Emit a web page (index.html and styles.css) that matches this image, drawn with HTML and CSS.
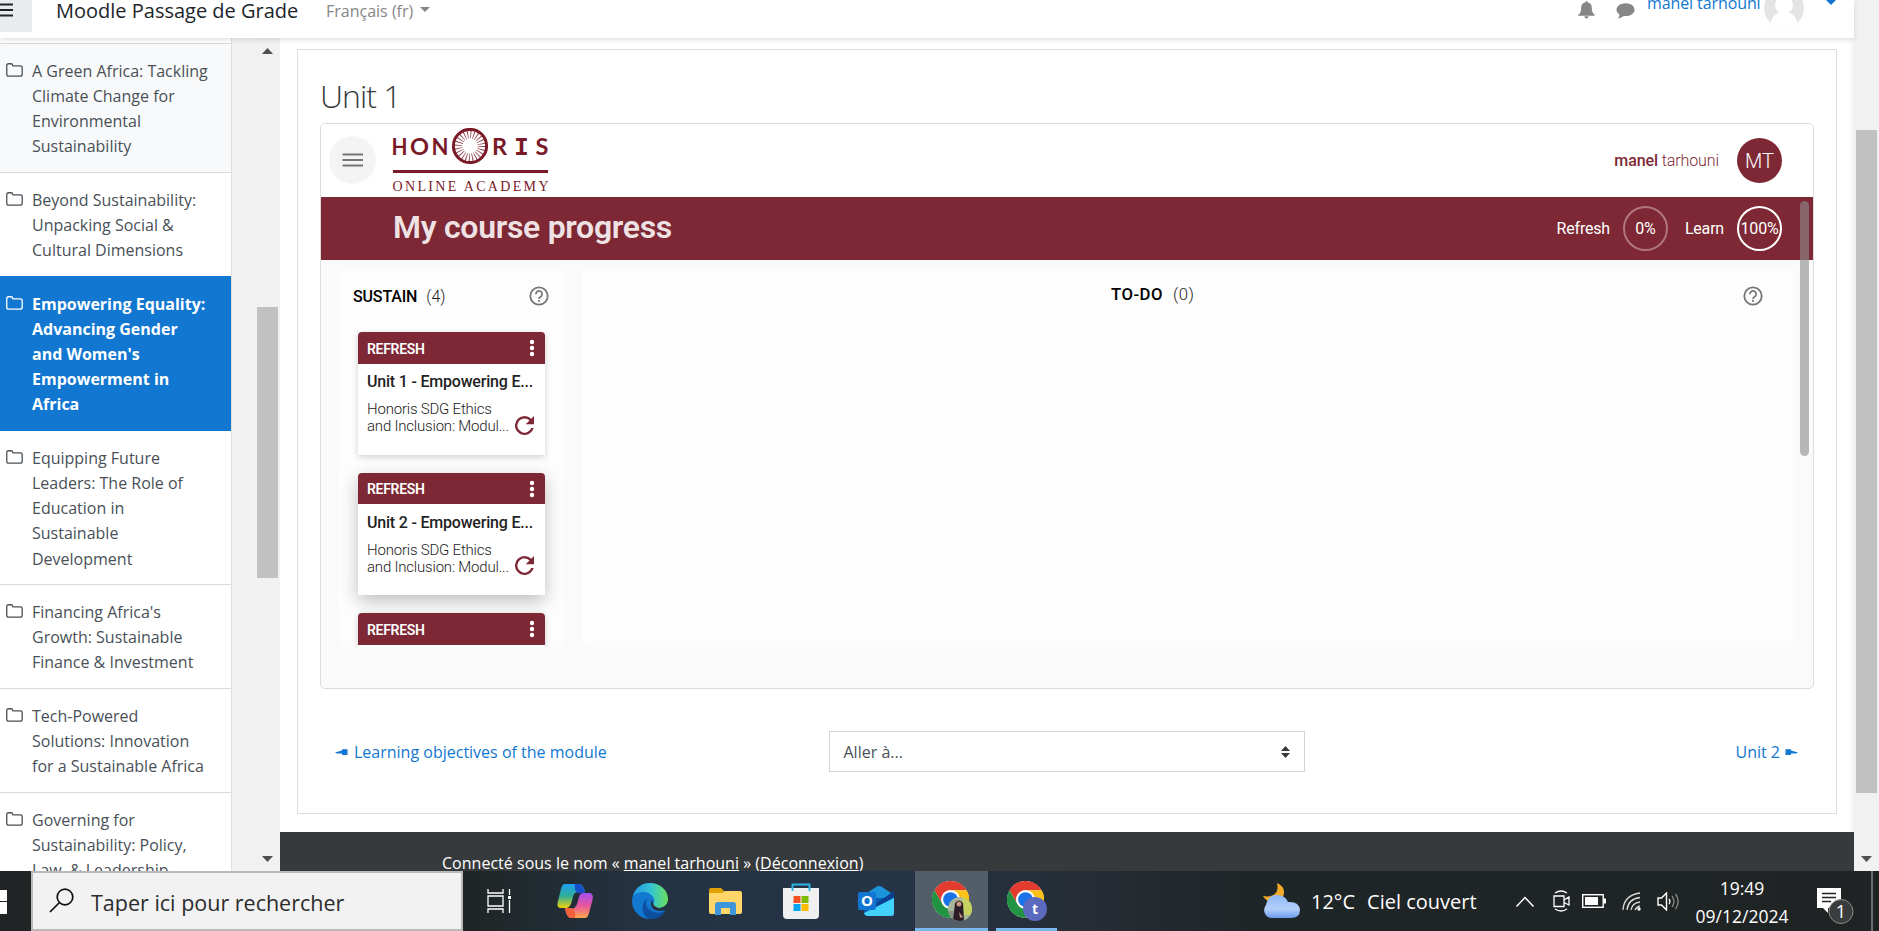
FILE: index.html
```html
<!DOCTYPE html>
<html lang="fr">
<head>
<meta charset="utf-8">
<title>Unit 1</title>
<link rel="stylesheet" href="styles.css">
</head>
<body>
<svg width="0" height="0" class="defs">
  <defs>
    <symbol id="folder" viewBox="0 0 17 14"><path d="M.75 2.6Q.75.75 2.6.75H5Q6.6.75 6.6 2.2 6.6 2.8 7.4 2.8H14.2Q16.2 2.8 16.2 4.6V11.3Q16.2 13.2 14.2 13.2H2.7Q.75 13.2.75 11.3Z" fill="none" stroke="currentColor" stroke-width="1.3"/></symbol>
    <symbol id="help" viewBox="0 0 20 20"><circle cx="10" cy="10" r="8.7" fill="none" stroke="#757575" stroke-width="1.8"/><path d="M6.9 8.2a3.1 3.1 0 1 1 4.9 2.4C10.700 11.400 10 11.800 10 13" fill="none" stroke="#757575" stroke-width="1.7"/><rect x="9.100" y="14" width="1.800" height="1.800" fill="#757575"/></symbol>
    <symbol id="dots" viewBox="0 0 6 18"><circle cx="3" cy="3" r="2.200"/><circle cx="3" cy="9" r="2.200"/><circle cx="3" cy="15" r="2.200"/></symbol>
    <symbol id="retry" viewBox="4 4 16 16"><path d="M17.650 6.350A7.960 7.960 0 0 0 12 4a8 8 0 1 0 7.730 10h-2.080A6 6 0 1 1 12 6c1.660 0 3.140.690 4.220 1.780L13 11h7V4z" fill="#7d2834"/></symbol>
    <symbol id="chrome" viewBox="0 0 48 48">
      <circle cx="24" cy="24" r="24" fill="#fff"/>
      <path d="M3.200 12A24 24 0 0 1 44.800 12H24A12 12 0 0 0 13.600 30Z" fill="#e33b2e"/>
      <path d="M44.800 12A24 24 0 0 1 24 48L34.400 30A12 12 0 0 0 24 12Z" fill="#fbc116"/>
      <path d="M24 48A24 24 0 0 1 3.200 12L13.600 30A12 12 0 0 0 34.400 30Z" fill="#229342"/>
      <circle cx="24" cy="24" r="12" fill="#fff"/><circle cx="24" cy="24" r="9.500" fill="#1a73e8"/>
    </symbol>
  </defs>
</svg>
<div class="screen">
  <header class="navbar">
    <div class="menu-btn"><svg width="13" height="14" viewBox="0 0 13 14"><path d="M0 1.500H13M0 7H13M0 12.500H13" stroke="#212529" stroke-width="2"/></svg></div>
    <div class="site">Moodle Passage de Grade</div>
    <div class="lang">Français (fr)</div>
    <i class="caret"></i>
    <div class="spacer"></div>
    <svg class="bell" width="17" height="18" viewBox="0 0 17 18"><path d="M8.500 0Q9.500 0 9.500 1.300C12.600 1.800 13.800 4 13.800 6.800 13.800 10.500 14.500 12.300 16.700 13.800V14.800H.3V13.800C2.500 12.300 3.200 10.500 3.200 6.800 3.200 4 4.400 1.800 7.500 1.300Q7.500 0 8.500 0ZM6.300 15.300H10.700Q10.300 17.600 8.500 17.600 6.700 17.600 6.300 15.300Z" fill="#868686"/></svg>
    <svg class="chat" width="19" height="16" viewBox="0 0 19 16"><path d="M9.700.3C14.600.3 18.600 3.100 18.600 6.700S14.600 13.100 9.700 13.100Q8.700 13.100 7.800 12.900Q5.200 15.300 1.600 15.400C3.300 14 3.500 12.800 3.500 11.500 1.800 10.300.5 8.700.5 6.700.5 3.100 4.800.3 9.700.3Z" fill="#868686"/></svg>
    <div class="user">manel tarhouni</div>
    <svg class="face" width="40" height="40" viewBox="0 0 40 40"><clipPath id="fc"><circle cx="20" cy="20" r="20"/></clipPath><g clip-path="url(#fc)"><rect width="40" height="40" fill="#e4e4e4"/><circle cx="20" cy="17" r="9" fill="#fff"/><path d="M6 38Q8 25 16 25H24Q32 25 34 38L30 40H10Z" fill="#fff"/></g></svg>
    <i class="caret blue"></i>
  </header>

  <div class="main">
    <nav class="drawer">
      <div class="sect tint"><svg><use href="#folder"/></svg><span>A Green Africa: Tackling<br>Climate Change for<br>Environmental<br>Sustainability</span></div>
      <div class="sect"><svg><use href="#folder"/></svg><span>Beyond Sustainability:<br>Unpacking Social &amp;<br>Cultural Dimensions</span></div>
      <div class="sect active"><svg><use href="#folder"/></svg><span>Empowering Equality:<br>Advancing Gender<br>and Women's<br>Empowerment in<br>Africa</span></div>
      <div class="sect"><svg><use href="#folder"/></svg><span>Equipping Future<br>Leaders: The Role of<br>Education in<br>Sustainable<br>Development</span></div>
      <div class="sect"><svg><use href="#folder"/></svg><span>Financing Africa's<br>Growth: Sustainable<br>Finance &amp; Investment</span></div>
      <div class="sect"><svg><use href="#folder"/></svg><span>Tech-Powered<br>Solutions: Innovation<br>for a Sustainable Africa</span></div>
      <div class="sect"><svg><use href="#folder"/></svg><span>Governing for<br>Sustainability: Policy,<br>Law, &amp; Leadership</span></div>
    </nav>
    <div class="gutter"></div>
    <div class="sbar left"><svg width="11" height="6"><path d="M0 6L5.500 0 11 6Z" fill="#505050"/></svg><div class="thumb"></div><svg width="11" height="6"><path d="M0 0L5.500 6 11 0Z" fill="#505050"/></svg></div>

    <div class="page">
      <section class="box">
        <h2>Unit 1</h2>
        <div class="frame">
          <div class="brand">
            <div class="burger"><svg width="22" height="14" viewBox="0 0 22 14"><path d="M.5 1.500H21M.5 7H21M.5 12.500H21" stroke="#757575" stroke-width="2"/></svg></div>
            <svg class="logo" width="158" height="64" viewBox="0 0 158 64">
              <g class="logo-caps"><text x="-0.500" y="27" textLength="16" lengthAdjust="spacingAndGlyphs">H</text><text x="18" y="27" textLength="19" lengthAdjust="spacingAndGlyphs">O</text><text x="39.500" y="27" textLength="17" lengthAdjust="spacingAndGlyphs">N</text><text x="100" y="27">R</text><text class="slab" x="122" y="27" textLength="15" lengthAdjust="spacingAndGlyphs">I</text><text x="143.500" y="27">S</text></g>
              <circle cx="78" cy="18" r="16.600" fill="#fff" stroke="#7a1a28" stroke-width="3"/>
              <circle cx="78" cy="18" r="11.500" fill="none" stroke="#7a1a28" stroke-width="8" stroke-dasharray=".9 2.111" opacity=".8"/>
              <rect x="1" y="42" width="155" height="3" fill="#7a1a28"/>
              <text class="logo-sub" x="0.500" y="63" textLength="156">ONLINE ACADEMY</text>
            </svg>
            <div class="spacer"></div>
            <div class="who"><b>manel</b> tarhouni</div>
            <div class="initials">MT</div>
          </div>
          <div class="progress">
            <h1>My course progress</h1>
            <div class="spacer"></div>
            <span class="lbl">Refresh</span><span class="ring dim">0%</span>
            <span class="lbl">Learn</span><span class="ring">100%</span>
          </div>
          <div class="board">
            <div class="col first">
              <div class="col-head"><b>SUSTAIN</b><span>(4)</span><svg class="q"><use href="#help"/></svg></div>
              <article class="card"><div class="card-top">REFRESH<svg class="dots"><use href="#dots"/></svg></div><div class="card-body"><h3>Unit 1 - Empowering E...</h3><p>Honoris SDG Ethics<br>and Inclusion: Modul...</p><svg class="retry"><use href="#retry"/></svg></div></article>
              <article class="card raised"><div class="card-top">REFRESH<svg class="dots"><use href="#dots"/></svg></div><div class="card-body"><h3>Unit 2 - Empowering E...</h3><p>Honoris SDG Ethics<br>and Inclusion: Modul...</p><svg class="retry"><use href="#retry"/></svg></div></article>
              <article class="card"><div class="card-top">REFRESH<svg class="dots"><use href="#dots"/></svg></div><div class="card-body"></div></article>
            </div>
            <div class="col wide">
              <div class="col-head"><b>TO-DO</b><span>(0)</span><svg class="q"><use href="#help"/></svg></div>
            </div>
          </div>
          <div class="frame-thumb"></div>
        </div>
        <div class="pager">
          <a><svg width="13" height="8"><path d="M0 4.500L7 2.500V1.200H12.500V7H7V5.500H2Z" fill="#1177d1"/></svg>Learning objectives of the module</a>
          <div class="select">Aller à...<svg width="9" height="12"><path d="M0 5L4.500 0 9 5ZM0 7L4.500 12 9 7Z" fill="#373a3c"/></svg></div>
          <a>Unit 2<svg width="13" height="8"><path d="M13 4.500L6 2.500V1.200H.5V7H6V5.500H11Z" fill="#1177d1"/></svg></a>
        </div>
      </section>
      <footer>Connecté sous le nom « <u>manel tarhouni</u> » (<u>Déconnexion</u>)</footer>
    </div>
    <div class="sbar right"><div class="thumb"></div><svg width="11" height="6"><path d="M0 0L5.500 6 11 0Z" fill="#505050"/></svg></div>
  </div>

  <div class="taskbar">
    <svg class="win" width="7" height="24"><path d="M0 0H7V11H0ZM0 12H7V24H0Z" fill="#fff"/></svg>
    <div class="search"><svg width="26" height="25" viewBox="0 0 26 25"><circle cx="16" cy="9" r="7.800" fill="none" stroke="#111" stroke-width="1.700"/><path d="M10.500 14.500L1 24" stroke="#111" stroke-width="1.700"/></svg><span>Taper ici pour rechercher</span></div>
    <div class="apps">
      <div class="app"><svg width="25" height="24" viewBox="0 0 25 24"><path d="M1 0V4H16V0M1 24V20H16V24M1 7H16V17H1ZM22.500 0V6M22.500 11V24" fill="none" stroke="#fff" stroke-width="1.300"/><rect x="21" y="7" width="3" height="3" fill="#fff"/></svg></div>
      <div class="app"><svg width="36" height="34" viewBox="0 0 36 34"><defs><linearGradient id="ca" x1="0" y1="0" x2="0" y2="1"><stop offset="0" stop-color="#1ea2f0"/><stop offset=".5" stop-color="#2fae9a"/><stop offset="1" stop-color="#f4d20a"/></linearGradient><linearGradient id="cb" x1="0" y1="0" x2="0" y2="1"><stop offset="0" stop-color="#a64df0"/><stop offset=".5" stop-color="#e8569c"/><stop offset="1" stop-color="#ffa74a"/></linearGradient></defs><path d="M8 0H22Q26 0 28 8H21Q17 8 16 13L14 20Q12 24 9 24H4Q-1 24 1 17L4 5Q5 0 8 0Z" fill="url(#ca)"/><path d="M18 0H22Q26 0 28 9H20Q17 6 18 0Z" fill="#174fc9"/><path d="M28 34H14Q10 34 8 25H14Q18 25 20 20L22 13Q23 9 27 9H32Q37 9 35.500 16L32 29Q31 34 28 34Z" fill="url(#cb)"/><path d="M18 34H14Q10 34 8 24H15Q19 27 18 34Z" fill="#f2603c"/></svg></div>
      <div class="app"><svg width="36" height="36" viewBox="0 0 36 36"><defs><linearGradient id="ea"><stop offset="0" stop-color="#2596e0"/><stop offset=".5" stop-color="#34c3d5"/><stop offset="1" stop-color="#69e25c"/></linearGradient></defs><path d="M18 0A18 18 0 0 0 18 36Q28 36 33 28L22 22 36 16Z" fill="#1278d0"/><path d="M1 13C4 4 10 0 18 0 28 0 36 7 36 16 36 22 31 25 26 25 21 25 20 23 22 20 24 15 18 9 12 9 7 9 3 11 1 13Z" fill="url(#ea)"/><path d="M17 14C12 18 13 26 22 29 27 31 32 29 34 26 30 35 23 37 17 36 9 32 8 20 17 14Z" fill="#0d4f9e"/><path d="M20 17C18 21 19 25 23 27 27 29 31 28 33 26.500 29 26 25 25 22.500 23 20.500 21 21 19 20 17Z" fill="#253142"/></svg></div>
      <div class="app"><svg width="33" height="27" viewBox="0 0 33 27"><path d="M0 2Q0 0 2 0H12L15 3V8H0Z" fill="#e0a106"/><path d="M0 5H13L16 3H31Q33 3 33 5V24Q33 26 31 26H2Q0 26 0 24Z" fill="#ffd667"/><path d="M6 27V17Q6 14 9 14H24Q27 14 27 17V27H21V20H12V27Z" fill="#3f96dd"/></svg></div>
      <div class="app"><svg width="36" height="36" viewBox="0 0 36 36"><path d="M0 5H36V32Q36 36 32 36H4Q0 36 0 32Z" fill="#f0f0f0"/><path d="M9.500 8V1.500H26.500V8" fill="none" stroke="#2db4e8" stroke-width="2"/><path d="M10.500 13H17.500V20H10.500Z" fill="#f25022"/><path d="M18.500 13H25.500V20H18.500Z" fill="#7fba00"/><path d="M10.500 21H17.500V28H10.500Z" fill="#00a4ef"/><path d="M18.500 21H25.500V28H18.500Z" fill="#ffb900"/></svg></div>
      <div class="app"><svg width="36" height="31" viewBox="0 0 36 31"><path d="M6 9L18 1Q21 -1 24 1L36 9V20H6Z" fill="#1b94dc"/><path d="M6 12H36V27Q36 30 33 30H10Q6 30 6 26Z" fill="#0b5cb5"/><path d="M16 19L36 5V11L18 22Z" fill="#0b3f91"/><path d="M36 12V27Q36 30 33 30H9Q7 30 6 27Z" fill="#43d3fa"/><rect y="6" width="18" height="18" rx="2" fill="#1175d2"/><text x="9" y="20" text-anchor="middle" class="o">O</text></svg></div>
      <div class="app on"><svg width="40" height="40" viewBox="0 0 40 40"><use href="#chrome" width="37" height="37"/><clipPath id="pc"><circle cx="28" cy="28" r="12"/></clipPath><g clip-path="url(#pc)"><rect x="16" y="16" width="24" height="24" fill="#a9b89a"/><path d="M30 16H40V34H32Z" fill="#c7d15e"/><path d="M16 30H24V40H16Z" fill="#8a9384"/><path d="M23 22Q27 17 31 22L32 40H21Z" fill="#2c1c26"/><circle cx="27" cy="23" r="2.500" fill="#c99a82"/><path d="M27 31L31 36L28 37Z" fill="#b98e86"/></g></svg></div>
      <div class="app open"><svg width="40" height="40" viewBox="0 0 40 40"><use href="#chrome" width="37" height="37"/><circle cx="28" cy="28" r="12" fill="#5b6abf"/><text x="28" y="33" text-anchor="middle" class="t">t</text></svg></div>
    </div>
    <div class="spacer"></div>
    <div class="weather"><svg width="37" height="36" viewBox="0 0 37 36"><defs><linearGradient id="cl" x1="0" y1="0" x2="0" y2="1"><stop offset="0" stop-color="#8db8f5"/><stop offset=".6" stop-color="#b4d0fb"/><stop offset="1" stop-color="#6c9cec"/></linearGradient></defs><path d="M14 0Q25 5 19 16L12 20Q3 19 0 13Q10 15 14 8 15 4 14 0Z" fill="#f5a928"/><path d="M8 35A8 8 0 0 1 3 22Q5 12 14 12 22 12 25 19 36 18 37 27 37 35 28 35Z" fill="url(#cl)"/></svg><span>12°C</span><span class="sky">Ciel couvert</span></div>
    <div class="tray">
      <svg width="18" height="11" viewBox="0 0 18 11"><path d="M.5 10.500L9 1.500 17.500 10.500" fill="none" stroke="#fff" stroke-width="1.500"/></svg>
      <svg class="meet" width="17" height="22" viewBox="0 0 17 22"><path d="M2 3Q8 -1 14 3M2 19Q8 23 14 19M1 6H11V16.500H1ZM11 10L16 7V15L11 12.500" fill="none" stroke="#fff" stroke-width="1.300"/></svg>
      <svg width="24" height="14" viewBox="0 0 24 14"><rect x=".7" y=".7" width="20.500" height="12.600" fill="none" stroke="#fff" stroke-width="1.400"/><path d="M3 3H16V11H3ZM21 4.500H24V9.500H21Z" fill="#fff"/></svg>
      <svg width="20" height="19" viewBox="0 0 20 19"><path d="M1 18Q2 3 18 1M5 18Q6 7 18 5.500M9 18Q10 11 18 10M13 18Q14 15 18 14" fill="none" stroke="#ddd" stroke-width="1.300"/><circle cx="17" cy="17" r="1.700" fill="#fff"/></svg>
      <svg width="23" height="19" viewBox="0 0 23 19"><path d="M1 6H4.500L9.500 1V18L4.500 13H1Z" fill="none" stroke="#fff" stroke-width="1.400"/><path d="M12 7Q14 9.500 12 12" fill="none" stroke="#fff" stroke-width="1.300"/><path d="M15 4Q19 9.500 15 15M18.500 2Q24 9.500 18.500 17" fill="none" stroke="#888" stroke-width="1.300"/></svg>
    </div>
    <div class="clock"><span>19:49</span><span>09/12/2024</span></div>
    <svg class="notif" width="37" height="38" viewBox="0 0 37 38"><path d="M0 0H24V20H11V25L6 20H0Z" fill="#fff"/><path d="M5 5.500H19M5 9.500H19M5 13.500H14" stroke="#222" stroke-width="1.300"/><circle cx="24" cy="23.500" r="12" fill="#3a3c3d" stroke="#8b8b8b"/><text x="24" y="30" text-anchor="middle" class="n">1</text></svg>
    <div class="peek"></div>
  </div>
</div>
</body>
</html>
```
FILE: styles.css
```css
* { box-sizing: border-box; }
body { margin: 0; background: #fff; font-family: "Open Sans", "Noto Sans", sans-serif; font-stretch: 92%; font-size: 16px; color: #373a3c; }
.defs { position: absolute; }
h1, h2, h3, p { margin: 0; font-weight: inherit; }
svg { flex: none; display: block; }
.screen { width: 1879px; height: 931px; overflow: hidden; display: flex; flex-direction: column; position: relative; }
.spacer { flex: 1; }

.navbar { position: relative; z-index: 2; height: 38px; width: 1854px; flex: none; display: flex; align-items: flex-start; background: #fff; box-shadow: 0 2px 5px rgba(0,0,0,.12); white-space: nowrap; }
.menu-btn { width: 32px; height: 32px; background: #e9ecef; padding-top: 3px; margin-right: 24px; }
.site { font-size: 20px; line-height: 28px; margin-top: -3px; width: 270px; color: #212529; }
.lang { line-height: 24px; margin-top: -1px; width: 94px; color: #868686; }
.caret { width: 0; height: 0; border: 5px solid transparent; border-top-color: #868686; border-bottom: 0; margin-top: 7px; }
.caret.blue { border-top-color: #1177d1; margin: 0 18px 0 22px; }
.bell { margin: 1px 21px 0 0; }
.chat { margin: 3px 12px 0 0; }
.user { color: #1177d1; line-height: 24px; margin-top: -9px; width: 117px; letter-spacing: -.1px; }
.face { margin-top: -12px; }

.main { height: 833px; flex: none; display: flex; }
.drawer { width: 232px; flex: none; background: #fff; overflow: hidden; padding-top: 5px; border-right: 1px solid #dfdfdf; }
.sect { display: flex; gap: 9px; padding: 14.800px 0 12.400px 6px; margin-bottom: -1px; border: solid #d9dadb; border-width: 1px 0; line-height: 25.200px; color: #495057; white-space: nowrap; }
.sect svg { width: 17px; height: 14px; margin-top: 4px; }
.tint { background: #f8f9fa; }
.active { position: relative; background: #1177d1; border-color: #1177d1; color: #fff; font-weight: 700; margin-right: -1px; }
.gutter { width: 24px; flex: none; background: #f2f2f2; }
.sbar { flex: none; background: #f1f1f1; display: flex; flex-direction: column; align-items: center; }
.sbar .thumb { background: #c1c1c1; width: 21px; }
.sbar.left { width: 24px; padding: 10px 2px 0 0; }
.left .thumb { height: 271px; margin: 253px 0 278px; }
.sbar.right { width: 25px; margin-top: -38px; padding-top: 130px; }
.right .thumb { height: 663px; margin-bottom: 63px; }

.page { width: 1574px; flex: none; padding-top: 11px; background: linear-gradient(90deg, #fff 1568px, #f3f3f3); }
.box { height: 765px; width: 1540px; margin-left: 17px; border: 1px solid #dedede; padding: 23px 22px 0; background: #fff; }
h2 { font-size: 32px; font-weight: 300; letter-spacing: -1px; line-height: 46px; height: 50px; }
.frame { position: relative; height: 566px; border: 1px solid #dcdcdc; border-radius: 5px; background: #fafafa; overflow: hidden; font-family: Roboto, sans-serif; font-stretch: 100%; }
.brand { height: 73px; background: #fff; display: flex; align-items: center; padding: 0 31px 0 8px; color: #7d2834; }
.burger { width: 47px; height: 48px; border-radius: 50%; background: #f4f4f4; display: flex; align-items: center; justify-content: center; margin: -1px 16px 0 0; }
.logo { margin-top: -1px; fill: #7a1a28; }
.logo-caps { font: 700 23.500px Lato, sans-serif; }
.slab { font-family: "DejaVu Sans Mono", monospace; }
.logo-sub { font: 14px "Liberation Serif", serif; }
.who { font-size: 16px; font-weight: 300; margin-right: 18px; letter-spacing: -.1px; }
.who b { font-weight: 500; }
.initials { width: 45px; height: 45px; border-radius: 50%; background: #7d2834; color: #fff; font-size: 20px; font-weight: 350; display: flex; align-items: center; justify-content: center; }
.progress { height: 63px; background: #7d2834; color: #fff; display: flex; align-items: center; padding: 0 31px 0 72px; }
h1 { font-size: 32px; font-weight: 600; color: #efe2e4; margin-top: -3px; letter-spacing: -.3px; }
.lbl { font-size: 16px; margin-right: 13px; letter-spacing: -.2px; }
.ring { width: 45px; height: 45px; border: 2px solid #fff; border-radius: 50%; display: flex; align-items: center; justify-content: center; font-size: 16px; letter-spacing: -.2px; }
.ring.dim { border-color: #b07680; margin-right: 17px; }
.board { display: flex; gap: 18px; padding: 9px 18px 0; height: 387px; }
.col { background: #fdfdfd; border-radius: 8px; overflow: hidden; }
.first { width: 225px; }
.wide { flex: 1; }
.col-head { position: relative; height: 63px; display: flex; gap: 9px; padding: 18px 0 0 14px; font-size: 16px; line-height: 20px; font-weight: 300; color: #222; }
.col-head b { font-weight: 500; color: #000; letter-spacing: -.15px; }
.wide .col-head { padding-left: 529px; padding-top: 16px; gap: 10px; }
.wide .col-head b, .wide .col-head span { font-size: 16.700px; letter-spacing: .5px; }
.q { width: 20px; height: 20px; margin: -1px 15px 0 auto; }
.wide .q { margin-right: 32px; margin-top: 1px; }
.card { width: 187px; height: 123px; margin: 0 0 18px 19px; border-radius: 4px 4px 0 0; background: #fff; box-shadow: 0 2px 6px rgba(0,0,0,.18); }
.raised { height: 122px; box-shadow: 0 6px 18px rgba(0,0,0,.25); }
.card-top { height: 32px; border-radius: 4px 4px 0 0; background: #7d2834; color: #fff; font-size: 14px; font-weight: 600; line-height: 34px; padding: 0 10px 0 9px; display: flex; justify-content: space-between; letter-spacing: -.3px; }
.raised .card-top { height: 31px; line-height: 33px; }
.dots { width: 6px; height: 18px; fill: #fff; margin-top: 7px; }
.card-body { position: relative; padding: 8px 0 0 9px; font-size: 15px; font-weight: 300; color: #222; white-space: nowrap; letter-spacing: -.2px; }
.raised .card-body { padding-top: 9px; }
h3 { font-size: 16px; font-weight: 500; line-height: 20px; margin-bottom: 9px; }
p { line-height: 17px; }
.retry { position: absolute; right: 11px; top: 52px; width: 19px; height: 19px; }
.frame-thumb { position: absolute; right: 4px; top: 77px; width: 9px; height: 255px; border-radius: 5px; background: rgba(140,140,140,.62); }

.pager { display: flex; justify-content: space-between; align-items: center; margin-top: 42px; height: 41px; padding: 0 16px 0 15px; }
.pager a { display: flex; align-items: center; gap: 6px; color: #1177d1; width: 280px; white-space: nowrap; }
.pager a:last-child { justify-content: flex-end; gap: 5px; }
.select { width: 476px; height: 41px; border: 1px solid #ced4da; display: flex; align-items: center; justify-content: space-between; padding: 0 14px; color: #495057; }
footer { margin-top: 18px; height: 60px; background: #373a3c; color: #fff; padding: 19px 0 0 162px; line-height: 25px; letter-spacing: .02px; }

.taskbar { position: relative; z-index: 3; height: 60px; flex: none; display: flex; align-items: center; background: linear-gradient(90deg, #202425 0, #1f2626 480px, #243344 650px, #253446 900px, #262d35 1080px, #1f2628 1250px, #1f2323 1879px); color: #fff; white-space: nowrap; }
.win { margin: 1px 24px 0 0; }
.search { width: 432px; height: 60px; border: 2px solid #b9b9b9; background: #f2f2f2; display: flex; align-items: center; gap: 16px; padding-left: 16px; color: #2b2b2b; font-size: 21.500px; }
.search svg { margin-top: -2px; }
.search span { margin-top: 2px; }
.apps { display: flex; height: 60px; margin-left: -1px; }
.app { width: 75.200px; display: flex; align-items: center; justify-content: center; }
.app:first-child { width: 75.500px; }
.app:nth-child(6) { width: 77px; padding-right: 1px; }
.app.on { width: 73px; background: #525e68; box-shadow: inset 0 -3px #76b9ed; }
.app.open { box-shadow: inset 0 -3px #76b9ed; width: 61px; margin-left: 8px; }
.o { font: 700 15px "Open Sans", sans-serif; fill: #fff; }
.t { font: 700 14px "Open Sans", sans-serif; fill: #fff; }
.n { font: 18px "Open Sans", sans-serif; fill: #fff; }
.weather { display: flex; align-items: center; font-size: 20px; width: 253px; }
.weather svg { margin-right: 11px; }
.weather span { margin-top: 1px; }
.weather .sky { margin-left: 12px; }
.tray { display: flex; align-items: center; width: 164px; justify-content: space-between; }
.meet { margin: 0 -3px 0 3px; }
.clock { width: 100px; margin: 1px 25px 0 12px; display: flex; flex-direction: column; text-align: center; font-size: 17.500px; line-height: 28px; }
.notif { margin-top: 12px; }
.peek { width: 2px; height: 60px; background: #6b6e6f; margin: 0 6px 0 17px; }
```
